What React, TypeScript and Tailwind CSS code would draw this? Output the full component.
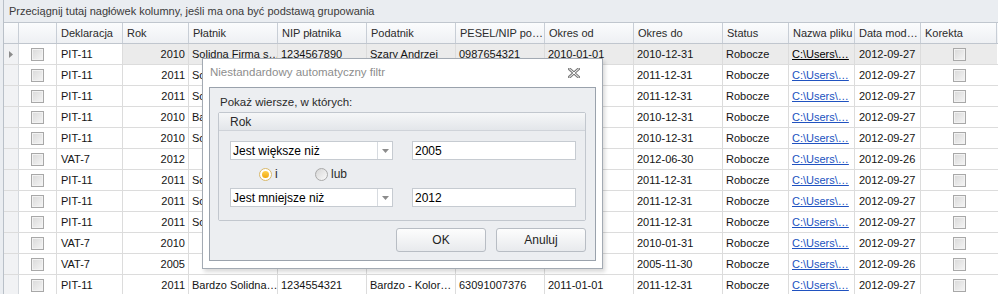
import React from 'react';

type Row = {
  dek: string;
  rok: string;
  platnik: string;
  nip: string;
  podatnik: string;
  pesel: string;
  od: string;
  do: string;
  mod: string;
  covered?: boolean;
};

const cols = [
  { key: 'dek', label: 'Deklaracja', w: 'w-[66px]' },
  { key: 'rok', label: 'Rok', w: 'w-[66px]' },
  { key: 'platnik', label: 'Płatnik', w: 'w-[89px]' },
  { key: 'nip', label: 'NIP płatnika', w: 'w-[89px]' },
  { key: 'podatnik', label: 'Podatnik', w: 'w-[89px]' },
  { key: 'pesel', label: 'PESEL/NIP po…', w: 'w-[89px]' },
  { key: 'od', label: 'Okres od', w: 'w-[89px]' },
  { key: 'do', label: 'Okres do', w: 'w-[89px]' },
  { key: 'status', label: 'Status', w: 'w-[66px]' },
  { key: 'plik', label: 'Nazwa pliku', w: 'w-[66px]' },
  { key: 'mod', label: 'Data mod…', w: 'w-[66px]' },
  { key: 'korekta', label: 'Korekta', w: 'w-[76px]' },
];

// rows 2..11 sit partly under the filter dialog, only the first letters of Płatnik peek out
const rows: Row[] = [
  { dek: 'PIT-11', rok: '2010', platnik: 'Solidna Firma s…', nip: '1234567890', podatnik: 'Szary Andrzej', pesel: '0987654321', od: '2010-01-01', do: '2010-12-31', mod: '2012-09-27' },
  { dek: 'PIT-11', rok: '2011', platnik: 'Solidna Firma s…', nip: '', podatnik: '', pesel: '', od: '', do: '2011-12-31', mod: '2012-09-27', covered: true },
  { dek: 'PIT-11', rok: '2011', platnik: 'Solidna Firma s…', nip: '', podatnik: '', pesel: '', od: '', do: '2011-12-31', mod: '2012-09-27', covered: true },
  { dek: 'PIT-11', rok: '2010', platnik: 'Bardzo Solidna…', nip: '', podatnik: '', pesel: '', od: '', do: '2010-12-31', mod: '2012-09-27', covered: true },
  { dek: 'PIT-11', rok: '2010', platnik: 'Solidna Firma s…', nip: '', podatnik: '', pesel: '', od: '', do: '2010-12-31', mod: '2012-09-27', covered: true },
  { dek: 'VAT-7', rok: '2012', platnik: '', nip: '', podatnik: '', pesel: '', od: '', do: '2012-06-30', mod: '2012-09-26', covered: true },
  { dek: 'PIT-11', rok: '2011', platnik: 'Solidna Firma s…', nip: '', podatnik: '', pesel: '', od: '', do: '2011-12-31', mod: '2012-09-27', covered: true },
  { dek: 'PIT-11', rok: '2011', platnik: 'Solidna Firma s…', nip: '', podatnik: '', pesel: '', od: '', do: '2011-12-31', mod: '2012-09-27', covered: true },
  { dek: 'PIT-11', rok: '2011', platnik: 'Solidna Firma s…', nip: '', podatnik: '', pesel: '', od: '', do: '2011-12-31', mod: '2012-09-27', covered: true },
  { dek: 'VAT-7', rok: '2010', platnik: '', nip: '', podatnik: '', pesel: '', od: '', do: '2010-01-31', mod: '2012-09-27', covered: true },
  { dek: 'VAT-7', rok: '2005', platnik: '', nip: '', podatnik: '', pesel: '', od: '', do: '2005-11-30', mod: '2012-09-26', covered: true },
  { dek: 'PIT-11', rok: '2011', platnik: 'Bardzo Solidna…', nip: '1234554321', podatnik: 'Bardzo - Kolor…', pesel: '63091007376', od: '2011-01-01', do: '2011-12-31', mod: '2012-09-27' },
];

const GridCheck = () => (
  <div className="w-[13px] h-[13px] border border-[#a8a8a8] bg-gradient-to-br from-[#d9d9d9] to-[#f5f5f5] shadow-[inset_0_0_0_1px_#f2f2f2]" />
);

const Radio = ({ checked }: { checked?: boolean }) => (
  <div
    className={
      checked
        ? 'w-[13px] h-[13px] rounded-full border border-[#d8b86a] bg-white flex items-center justify-center'
        : 'w-[13px] h-[13px] rounded-full border border-[#a9a9a9] bg-gradient-to-br from-[#d6d6d6] to-[#fafafa]'
    }
  >
    {checked && <div className="w-[7px] h-[7px] rounded-full bg-gradient-to-b from-[#ffd24a] to-[#f0a800]" />}
  </div>
);

const Combo = ({ value }: { value: string }) => (
  <div className="w-[163px] h-[19px] flex bg-white border border-[#c6cbd1]">
    <div className="flex-1 flex items-center pl-[2px] text-[12px] text-black">{value}</div>
    <div className="w-[15px] border-l border-[#d7dbe0] flex items-center justify-center">
      <svg width="7" height="4" viewBox="0 0 7 4">
        <path d="M0 0 H7 L3.5 4 Z" fill="#8c8c8c" />
      </svg>
    </div>
  </div>
);

const TextBox = ({ value }: { value: string }) => (
  <div className="w-[164px] h-[19px] flex items-center pl-[2px] bg-white border border-[#c6cbd1] text-[12px] text-black">
    {value}
  </div>
);

const Button = ({ label }: { label: string }) => (
  <div className="w-[90px] h-[24px] flex items-center justify-center rounded-[3px] border border-[#b8bdc4] bg-gradient-to-b from-[#fdfdfd] to-[#e8eaed] text-[12px] text-[#222]">
    {label}
  </div>
);

const FilterDialog = () => (
  <div className="absolute left-[202px] top-[58px] w-[401px] h-[211px] flex flex-col bg-white border border-[#a3aab3] shadow-[2px_3px_4px_rgba(0,0,0,0.15)]">
    <div className="h-[28px] flex items-center justify-between pl-[7px] pr-[22px]">
      <span className="text-[11.5px] text-[#8d8d8d]">Niestandardowy automatyczny filtr</span>
      <svg width="12" height="10" viewBox="0 0 12 10">
        <path d="M1.5 1 L10.5 9 M10.5 1 L1.5 9" stroke="#7c7c7c" strokeWidth="3" strokeLinecap="square" />
        <path d="M1.5 1 L10.5 9 M10.5 1 L1.5 9" stroke="#ffffff" strokeWidth="1" strokeLinecap="square" />
      </svg>
    </div>
    <div className="flex-1 mx-[6px] mb-[7px] flex flex-col border border-[#9aa2ac] bg-[#eceef1] pl-[8px] pr-[9px]">
      <div className="h-[24px] flex items-end text-[11.5px] text-[#2a2a2a] pl-[2px] pb-[1px]">Pokaż wiersze, w których:</div>
      <div className="h-[109px] flex flex-col border border-[#c2c7ce] rounded-[2px]">
        <div className="h-[18px] flex items-center pl-[11px] text-[12px] text-[#2a2a2a] bg-gradient-to-b from-[#f6f7f8] to-[#e3e6ea] border-b border-[#cfd3d9]">
          Rok
        </div>
        <div className="flex-1 flex flex-col pl-[11px] pr-[9px] pt-[10px] bg-[#ebedf0]">
          <div className="flex justify-between">
            <Combo value="Jest większe niż" />
            <TextBox value="2005" />
          </div>
          <div className="h-[28px] flex items-center pl-[29px] text-[12px] text-[#2a2a2a]">
            <Radio checked />
            <span className="ml-[3px] w-[40px]">i</span>
            <Radio />
            <span className="ml-[3px]">lub</span>
          </div>
          <div className="flex justify-between">
            <Combo value="Jest mniejsze niż" />
            <TextBox value="2012" />
          </div>
        </div>
      </div>
      <div className="flex justify-end gap-[10px] mt-[7px]">
        <Button label="OK" />
        <Button label="Anuluj" />
      </div>
    </div>
  </div>
);

export default function App() {
  return (
    <div className="relative w-[998px] h-[294px] overflow-hidden bg-[#eaedf1] font-['Liberation_Sans',Arial,sans-serif] text-[11px] text-[#141414]">
      <div className="h-[22px] flex items-center pl-[5px] border-l border-[#b9c0c8] ml-[3px] text-[#3a3a3a]">
        Przeciągnij tutaj nagłówek kolumny, jeśli ma ona być podstawą grupowania
      </div>
      <div className="ml-[3px] border-l border-[#b9c0c8] bg-white">
        {/* header */}
        <div className="h-[22px] flex border-t border-b border-[#c0c6ce] bg-gradient-to-b from-[#fbfcfd] to-[#eef0f3]">
          <div className="w-[15px] border-r border-[#c8ced6]" />
          <div className="w-[38px] border-r border-[#c8ced6]" />
          {cols.map((c) => (
            <div key={c.key} className={`${c.w} shrink-0 flex items-center pl-[4px] border-r border-[#c8ced6] text-[#2b2b2b] whitespace-nowrap overflow-hidden`}>
              {c.label}
            </div>
          ))}
        </div>
        {/* rows */}
        {rows.map((r, i) => {
          const focused = i === 0;
          const cell = focused ? 'bg-[#ebebeb]' : 'bg-white';
          return (
            <div key={i} className="h-[21px] flex border-b border-[#dcdcdc]">
              <div className="w-[15px] shrink-0 border-r border-[#d4d8dd] bg-[#f1f2f4] flex items-center justify-center">
                {focused && (
                  <svg width="4" height="7" viewBox="0 0 4 7">
                    <path d="M0 0 L4 3.5 L0 7 Z" fill="#8b8b8b" />
                  </svg>
                )}
              </div>
              <div className="w-[38px] shrink-0 border-r border-[#dcdcdc] flex items-center justify-center">
                <GridCheck />
              </div>
              <div className="w-[66px] shrink-0 border-r border-[#dcdcdc] flex items-center px-[4px]">{r.dek}</div>
              <div className={`w-[66px] shrink-0 border-r border-[#dcdcdc] flex items-center justify-end px-[3px] ${cell}`}>{r.rok}</div>
              <div className={`w-[89px] shrink-0 border-r border-[#dcdcdc] flex items-center px-[3px] whitespace-nowrap overflow-hidden ${cell}`}>
                <span className={r.covered ? 'w-[10px] overflow-hidden' : ''}>{r.platnik}</span>
              </div>
              <div className={`w-[89px] shrink-0 border-r border-[#dcdcdc] flex items-center px-[3px] ${cell}`}>{r.nip}</div>
              <div className={`w-[89px] shrink-0 border-r border-[#dcdcdc] flex items-center px-[3px] whitespace-nowrap overflow-hidden ${cell}`}>{r.podatnik}</div>
              <div className={`w-[89px] shrink-0 border-r border-[#dcdcdc] flex items-center px-[3px] ${cell}`}>{r.pesel}</div>
              <div className={`w-[89px] shrink-0 border-r border-[#dcdcdc] flex items-center px-[3px] ${cell}`}>{r.od}</div>
              <div className={`w-[89px] shrink-0 border-r border-[#dcdcdc] flex items-center px-[3px] ${cell}`}>{r.do}</div>
              <div className={`w-[66px] shrink-0 border-r border-[#dcdcdc] flex items-center px-[3px] ${cell}`}>Robocze</div>
              <div className={`w-[66px] shrink-0 border-r border-[#dcdcdc] flex items-center px-[3px] whitespace-nowrap overflow-hidden ${cell}`}>
                <span className={focused ? 'underline text-black' : 'underline text-[#2052c0]'}>C:\Users\…</span>
              </div>
              <div className={`w-[66px] shrink-0 border-r border-[#dcdcdc] flex items-center px-[4px] ${cell}`}>{r.mod}</div>
              <div className={`w-[76px] shrink-0 flex items-center justify-center ${cell}`}>
                <GridCheck />
              </div>
            </div>
          );
        })}
      </div>
      <FilterDialog />
    </div>
  );
}
